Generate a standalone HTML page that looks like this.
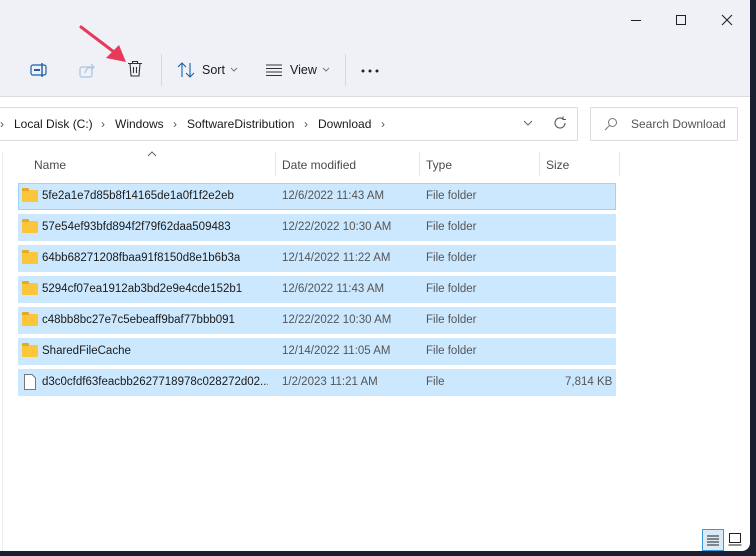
<!DOCTYPE html>
<html><head><style>
*{margin:0;padding:0;box-sizing:border-box}
body{width:756px;height:556px;background:#1a2030;position:relative;overflow:hidden;font-family:"Liberation Sans",sans-serif;font-size:12px;color:#1a1a1a}
.win{position:absolute;left:0;top:0;width:750px;height:551px;background:#fff;border-radius:0 0 8px 0;overflow:hidden}
.top{position:absolute;left:0;top:0;width:750px;height:97px;background:#eff1f7;border-bottom:1px solid #dcdde3}
.abs{position:absolute}
.txt{position:absolute;white-space:nowrap}
.row{position:absolute;left:18px;width:598px;height:27px;background:#cce8ff}
.row span{position:absolute;top:7px;white-space:nowrap;font-size:11.5px;overflow:hidden}
.folder{position:absolute;left:4px;top:7px;width:16px;height:12px;background:#fcc63c;border-radius:1px}
.folder:before{content:"";position:absolute;left:0;top:-2px;width:7px;height:3px;background:#e9a820;border-radius:1px 1px 0 0}
.hdr{position:absolute;top:158px;color:#4a4a4a}
.sep{position:absolute;top:152px;width:1px;height:24px;background:#e5e5e5}
</style></head><body>
<div class="win">
<div class="top">
  <div class="abs" style="left:631px;top:20px;width:10px;height:1px;background:#222"></div>
  <div class="abs" style="left:676px;top:15px;width:10px;height:10px;border:1px solid #222"></div>
  <svg class="abs" style="left:721px;top:14px" width="12" height="12"><path d="M1 1L11 11M11 1L1 11" stroke="#222" stroke-width="1.1"/></svg>
  <svg class="abs" style="left:30px;top:61px" width="18" height="18"><rect x="1" y="4" width="15" height="10" rx="2" fill="none" stroke="#1b5fa8" stroke-width="1.2"/><rect x="4" y="8" width="6" height="2" fill="#1b5fa8"/><path d="M12 2V16" stroke="#1b5fa8" stroke-width="1.4"/></svg>
  <svg class="abs" style="left:79px;top:62px" width="18" height="16"><rect x="1" y="5" width="12" height="10" rx="2" fill="none" stroke="#a8c4e3" stroke-width="1.2"/><path d="M6 11C7 6 10 5 15 5M12 2L15 5L12 8" fill="none" stroke="#a8c4e3" stroke-width="1.2"/></svg>
  <svg class="abs" style="left:127px;top:60px" width="16" height="18"><path d="M1 3.5H15M5.5 3.5V1.5H10.5V3.5M3 3.5L4 16H12L13 3.5M6.5 7V13M9.5 7V13" fill="none" stroke="#333" stroke-width="1.1"/></svg>
  <div class="abs" style="left:161px;top:54px;width:1px;height:32px;background:#d8d9de"></div>
  <svg class="abs" style="left:177px;top:62px" width="18" height="16"><path d="M5 15V1M1 5L5 1L9 5M13 1V15M9 11L13 15L17 11" fill="none" stroke="#1b5fa8" stroke-width="1.1"/></svg>
  <div class="txt" style="left:202px;top:63px;font-size:12.5px">Sort</div>
  <svg class="abs" style="left:230px;top:67px" width="8" height="5"><path d="M1 1L4 4L7 1" fill="none" stroke="#777"/></svg>
  <svg class="abs" style="left:266px;top:64px" width="16" height="12"><path d="M0 1H16M0 4.5H16M0 8H16M0 11.5H16" stroke="#333"/></svg>
  <div class="txt" style="left:290px;top:63px;font-size:12.5px">View</div>
  <svg class="abs" style="left:322px;top:67px" width="8" height="5"><path d="M1 1L4 4L7 1" fill="none" stroke="#777"/></svg>
  <div class="abs" style="left:345px;top:54px;width:1px;height:32px;background:#d8d9de"></div>
  <svg class="abs" style="left:361px;top:69px" width="18" height="4"><circle cx="2" cy="2" r="1.5" fill="#222"/><circle cx="9" cy="2" r="1.5" fill="#222"/><circle cx="16" cy="2" r="1.5" fill="#222"/></svg>
  <svg class="abs" style="left:78px;top:24px" width="50" height="40"><path d="M3 3L40 31" stroke="#e8395a" stroke-width="3" stroke-linecap="round"/><path d="M48 38L28 34L41 21Z" fill="#e8395a"/></svg>
</div>
<div class="abs" style="left:-2px;top:107px;width:580px;height:34px;border:1px solid #dcdcdc"></div>
<div class="txt" style="left:0;top:117px;color:#555">›</div>
<div class="txt" style="left:14px;top:117px">Local Disk (C:)</div>
<div class="txt" style="left:101px;top:117px;color:#555">›</div>
<div class="txt" style="left:115px;top:117px">Windows</div>
<div class="txt" style="left:173px;top:117px;color:#555">›</div>
<div class="txt" style="left:187px;top:117px">SoftwareDistribution</div>
<div class="txt" style="left:304px;top:117px;color:#555">›</div>
<div class="txt" style="left:318px;top:117px">Download</div>
<div class="txt" style="left:381px;top:117px;color:#555">›</div>
<svg class="abs" style="left:523px;top:120px" width="10" height="6"><path d="M1 1L5 5L9 1" fill="none" stroke="#666"/></svg>
<svg class="abs" style="left:553px;top:116px" width="14" height="14"><path d="M12 7A5 5 0 1 1 10 3M10 0.5V3.5H13" fill="none" stroke="#555" stroke-width="1.1"/></svg>
<div class="abs" style="left:590px;top:107px;width:148px;height:34px;border:1px solid #dcdcdc"></div>
<svg class="abs" style="left:604px;top:117px" width="14" height="14"><circle cx="8.5" cy="5.5" r="4" fill="none" stroke="#777"/><path d="M5.5 8.5L1 13" stroke="#777"/></svg>
<div class="txt" style="left:631px;top:117px;color:#555">Search Download</div>
<svg class="abs" style="left:147px;top:151px" width="10" height="6"><path d="M1 5L5 1L9 5" fill="none" stroke="#666"/></svg>
<div class="abs" style="left:2px;top:152px;width:1px;height:400px;background:#eee"></div>
<div class="hdr" style="left:34px">Name</div>
<div class="sep" style="left:275px"></div>
<div class="hdr" style="left:282px">Date modified</div>
<div class="sep" style="left:419px"></div>
<div class="hdr" style="left:426px">Type</div>
<div class="sep" style="left:539px"></div>
<div class="hdr" style="left:546px">Size</div>
<div class="sep" style="left:619px"></div>
<div class="row" style="top:183px;border:1px solid #99d1ff"><div class="folder" style="left:3px;top:6px"></div><span style="left:23px;top:6px">5fe2a1e7d85b8f14165de1a0f1f2e2eb</span><span style="left:263px;top:6px;color:#555">12/6/2022 11:43 AM</span><span style="left:407px;top:6px;color:#555">File folder</span></div>
<div class="row" style="top:214px"><div class="folder"></div><span style="left:24px">57e54ef93bfd894f2f79f62daa509483</span><span style="left:264px;color:#555">12/22/2022 10:30 AM</span><span style="left:408px;color:#555">File folder</span></div>
<div class="row" style="top:245px"><div class="folder"></div><span style="left:24px">64bb68271208fbaa91f8150d8e1b6b3a</span><span style="left:264px;color:#555">12/14/2022 11:22 AM</span><span style="left:408px;color:#555">File folder</span></div>
<div class="row" style="top:276px"><div class="folder"></div><span style="left:24px">5294cf07ea1912ab3bd2e9e4cde152b1</span><span style="left:264px;color:#555">12/6/2022 11:43 AM</span><span style="left:408px;color:#555">File folder</span></div>
<div class="row" style="top:307px"><div class="folder"></div><span style="left:24px">c48bb8bc27e7c5ebeaff9baf77bbb091</span><span style="left:264px;color:#555">12/22/2022 10:30 AM</span><span style="left:408px;color:#555">File folder</span></div>
<div class="row" style="top:338px"><div class="folder"></div><span style="left:24px">SharedFileCache</span><span style="left:264px;color:#555">12/14/2022 11:05 AM</span><span style="left:408px;color:#555">File folder</span></div>
<div class="row" style="top:369px"><svg class="abs" style="left:6px;top:5px" width="12" height="16"><path d="M0.5 0.5H8L11.5 4V15.5H0.5Z" fill="#fff" stroke="#777"/></svg><span style="left:24px;width:226px">d3c0cfdf63feacbb2627718978c028272d02...</span><span style="left:264px;color:#555">1/2/2023 11:21 AM</span><span style="left:408px;color:#555">File</span><span style="left:547px;color:#555">7,814 KB</span></div>
<div class="abs" style="left:702px;top:529px;width:22px;height:22px;border:1px solid #3a96dd;background:#dbeaf7"></div>
<svg class="abs" style="left:707px;top:535px" width="12" height="11"><path d="M0 1H12M0 4H12M0 7H12M0 10H12" stroke="#222"/></svg>
<svg class="abs" style="left:728px;top:533px" width="14" height="13"><rect x="1.5" y="0.5" width="11" height="9" fill="none" stroke="#222"/><path d="M0.5 12H13.5" stroke="#222"/></svg>
</div>
</body></html>
